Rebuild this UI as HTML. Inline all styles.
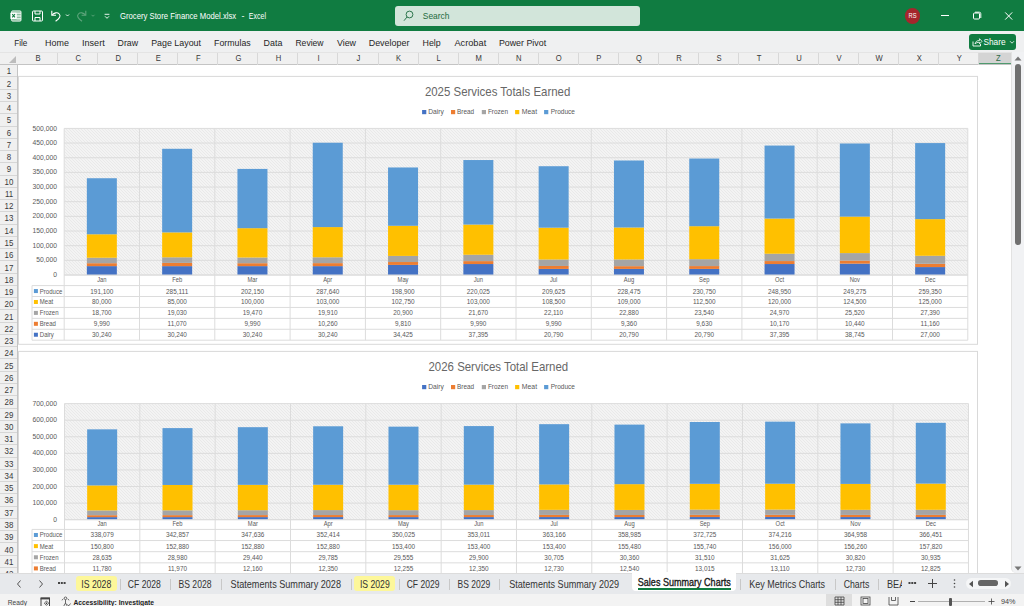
<!DOCTYPE html>
<html><head><meta charset="utf-8">
<style>
*{margin:0;padding:0;box-sizing:border-box}
html,body{width:1024px;height:606px;overflow:hidden;background:#fff;font-family:"Liberation Sans",sans-serif}
.a{position:absolute;white-space:nowrap}
#title{position:absolute;left:0;top:0;width:1024px;height:31.3px;background:#107c41}
#ribbon{position:absolute;left:0;top:31.3px;width:1024px;height:21px;background:#eff0f1}
#colhdr{position:absolute;left:0;top:52px;width:1011px;height:13px;background:#f0f0f0;border-top:1px solid #e4e4e4;border-bottom:1px solid #c4c4c4}
.ch{position:absolute;top:0;height:12px;width:40px;border-right:1px solid #d8d8d8}
#rowhdr{position:absolute;left:0;top:65px;width:18px;height:508px;background:#f0f0f0;border-right:1px solid #c4c4c4}
.rh{position:absolute;left:0;width:17px;border-bottom:1px solid #d6d6d6}
#tabs{position:absolute;left:0;top:573px;width:1024px;height:21px;background:#e7e9ec;box-shadow:inset 0 1px 0 #dcdcdc}
.sep{position:absolute;top:6px;width:1px;height:11px;background:#c8c8c8}
#status{position:absolute;left:0;top:594px;width:1024px;height:12px;background:#f3f3f3}
#vscroll{position:absolute;left:1011px;top:52px;width:13px;height:521px;background:#f1f2f4;border-left:1px solid #e2e2e2;border-radius:0 0 0 5px}
</style></head><body>
<div id="title">
  <svg class="a" style="left:0;top:0" width="400" height="31" viewBox="0 0 400 31">
    <rect x="11.5" y="10.8" width="9.6" height="10.4" rx="1.2" fill="#8fc0a3"/>
    <g stroke="#fff" stroke-width="1" fill="none">
      <rect x="11.5" y="10.8" width="9.6" height="10.4" rx="1.2" stroke-opacity="0.7"/>
      <line x1="16.5" y1="13.2" x2="21" y2="13.2"/><line x1="16.5" y1="16" x2="21" y2="16"/><line x1="16.5" y1="18.8" x2="21" y2="18.8"/>
    </g>
    <rect x="10.4" y="12.6" width="6.4" height="6.4" rx="0.6" fill="#fff"/>
    <path d="M12.2 14.2l2.8 3.2M15 14.2l-2.8 3.2" stroke="#107c41" stroke-width="1.1"/>
    <g fill="none" stroke="#fff" stroke-width="1">
      <rect x="32.5" y="11" width="10" height="10" rx="1"/>
      <path d="M35 11v3h5v-3"/>
      <path d="M35 21v-3.5h5v3.5"/>
    </g>
    <g fill="none" stroke="#fff" stroke-width="1.1">
      <path d="M51.8 10.8v4.4h4.2"/>
      <path d="M52.2 15c1.8-2.4 5.2-3 7-1c1.8 2 0.6 4-3.6 7.2"/>
      <path d="M66 14.5l1.5 1.5l1.5-1.5" stroke-width="0.9"/>
    </g>
    <g fill="none" stroke="#5fa57d" stroke-width="1.1">
      <path d="M85.8 10.8v4.4h-4.2"/>
      <path d="M85.4 15c-1.8-2.4-5.2-3-7-1c-1.8 2-0.6 4 3.6 7.2"/>
      <path d="M91.5 14.8l1.5 1.5l1.5-1.5" stroke-width="0.9"/>
    </g>
    <g fill="none" stroke="#fff" stroke-width="0.9">
      <line x1="104.6" y1="14.3" x2="109.4" y2="14.3"/>
      <path d="M105 16.3l2 2l2-2"/>
    </g>
  </svg>
  <div class="a" style="left:395.1px;top:5.9px;width:245px;height:20.3px;background:#d2e5da;border-radius:3px"></div>
  <svg class="a" style="left:400px;top:8px" width="16" height="16" viewBox="0 0 16 16"><circle cx="9.5" cy="6.5" r="3.4" fill="none" stroke="#1d6b40" stroke-width="0.9"/><line x1="7.1" y1="8.9" x2="4" y2="12.7" stroke="#1d6b40" stroke-width="0.9"/></svg>
  <div class="a" style="left:904.9px;top:8.2px;width:15.4px;height:15.4px;border-radius:50%;background:#a4262c"></div>
  <div class="a" style="left:941px;top:15px;width:7.5px;height:1px;background:#fff"></div>
  <svg class="a" style="left:970px;top:10px" width="14" height="12" viewBox="0 0 14 12"><rect x="3.5" y="3" width="6" height="6" rx="1" fill="none" stroke="#fff" stroke-width="1"/><path d="M5 2.2h4.3a1.5 1.5 0 0 1 1.5 1.5v4.3" fill="none" stroke="#fff" stroke-width="1"/></svg>
  <svg class="a" style="left:1003px;top:10px" width="12" height="12" viewBox="0 0 12 12"><path d="M2.2 2.4l7 7.2M9.2 2.4l-7 7.2" stroke="#fff" stroke-width="1"/></svg>
</div>
<div id="ribbon">
  <div class="a" style="left:969.3px;top:2.9px;width:47px;height:15.7px;background:#107c41;border-radius:3px"></div>
  <svg class="a" style="left:971px;top:5px" width="12" height="12" viewBox="0 0 12 12"><path d="M2 5.5v4.5h7.5v-2" fill="none" stroke="#fff" stroke-width="0.9"/><path d="M4 8c0.5-2.5 2-3.5 4.5-3.5v-1.8l2.5 2.6l-2.5 2.6v-1.6c-2 0-3.5 0.5-4.5 1.7z" fill="none" stroke="#fff" stroke-width="0.8"/></svg>
  <svg class="a" style="left:1009px;top:9px" width="6" height="5" viewBox="0 0 6 5"><path d="M1 1.2l2 2l2-2" fill="none" stroke="#fff" stroke-width="0.8"/></svg>
</div>
<div id="colhdr">
  <svg class="a" style="left:0;top:0" width="18" height="13"><path d="M16 3v7h-7z" fill="#bcbcbc"/></svg>
  <div class="ch" style="left:18.10px;width:40.05px"></div>
<div class="ch" style="left:58.15px;width:40.05px"></div>
<div class="ch" style="left:98.20px;width:40.05px"></div>
<div class="ch" style="left:138.25px;width:40.05px"></div>
<div class="ch" style="left:178.30px;width:40.05px"></div>
<div class="ch" style="left:218.35px;width:40.05px"></div>
<div class="ch" style="left:258.40px;width:40.05px"></div>
<div class="ch" style="left:298.45px;width:40.05px"></div>
<div class="ch" style="left:338.50px;width:40.05px"></div>
<div class="ch" style="left:378.55px;width:40.05px"></div>
<div class="ch" style="left:418.60px;width:40.05px"></div>
<div class="ch" style="left:458.65px;width:40.05px"></div>
<div class="ch" style="left:498.70px;width:40.05px"></div>
<div class="ch" style="left:538.75px;width:40.05px"></div>
<div class="ch" style="left:578.80px;width:40.05px"></div>
<div class="ch" style="left:618.85px;width:40.05px"></div>
<div class="ch" style="left:658.90px;width:40.05px"></div>
<div class="ch" style="left:698.95px;width:40.05px"></div>
<div class="ch" style="left:739.00px;width:40.05px"></div>
<div class="ch" style="left:779.05px;width:40.05px"></div>
<div class="ch" style="left:819.10px;width:40.05px"></div>
<div class="ch" style="left:859.15px;width:40.05px"></div>
<div class="ch" style="left:899.20px;width:40.05px"></div>
<div class="ch" style="left:939.25px;width:40.05px"></div>
<div class="ch" style="left:979.30px;width:32.8px;background:#d4d4d4;border-right:none;border-bottom:1.6px solid #4f9a6e;height:11.4px"></div>
</div>
<div id="rowhdr">
  <div class="rh" style="top:0.24px;height:12.26px"></div>
<div class="rh" style="top:12.50px;height:12.26px"></div>
<div class="rh" style="top:24.76px;height:12.26px"></div>
<div class="rh" style="top:37.02px;height:12.26px"></div>
<div class="rh" style="top:49.28px;height:12.26px"></div>
<div class="rh" style="top:61.54px;height:12.26px"></div>
<div class="rh" style="top:73.80px;height:12.26px"></div>
<div class="rh" style="top:86.06px;height:12.26px"></div>
<div class="rh" style="top:98.32px;height:12.26px"></div>
<div class="rh" style="top:110.58px;height:12.26px"></div>
<div class="rh" style="top:122.84px;height:12.26px"></div>
<div class="rh" style="top:135.10px;height:12.26px"></div>
<div class="rh" style="top:147.36px;height:12.26px"></div>
<div class="rh" style="top:159.62px;height:12.26px"></div>
<div class="rh" style="top:171.88px;height:12.26px"></div>
<div class="rh" style="top:184.14px;height:12.26px"></div>
<div class="rh" style="top:196.40px;height:12.26px"></div>
<div class="rh" style="top:208.66px;height:12.26px"></div>
<div class="rh" style="top:220.92px;height:12.26px"></div>
<div class="rh" style="top:233.18px;height:12.26px"></div>
<div class="rh" style="top:245.44px;height:12.26px"></div>
<div class="rh" style="top:257.70px;height:12.26px"></div>
<div class="rh" style="top:269.96px;height:12.26px"></div>
<div class="rh" style="top:282.22px;height:12.26px"></div>
<div class="rh" style="top:294.48px;height:12.26px"></div>
<div class="rh" style="top:306.74px;height:12.26px"></div>
<div class="rh" style="top:319.00px;height:12.26px"></div>
<div class="rh" style="top:331.26px;height:12.26px"></div>
<div class="rh" style="top:343.52px;height:12.26px"></div>
<div class="rh" style="top:355.78px;height:12.26px"></div>
<div class="rh" style="top:368.04px;height:12.26px"></div>
<div class="rh" style="top:380.30px;height:12.26px"></div>
<div class="rh" style="top:392.56px;height:12.26px"></div>
<div class="rh" style="top:404.82px;height:12.26px"></div>
<div class="rh" style="top:417.08px;height:12.26px"></div>
<div class="rh" style="top:429.34px;height:12.26px"></div>
<div class="rh" style="top:441.60px;height:12.26px"></div>
<div class="rh" style="top:453.86px;height:12.26px"></div>
<div class="rh" style="top:466.12px;height:12.26px"></div>
<div class="rh" style="top:478.38px;height:12.26px"></div>
<div class="rh" style="top:490.64px;height:12.26px"></div>
<div class="rh" style="top:502.90px;height:12.26px"></div>
</div>
<svg class="a" style="left:0;top:0" width="1024" height="606" viewBox="0 0 1024 606" font-family="Liberation Sans, sans-serif">
  <defs>
    <pattern id="hatch" patternUnits="userSpaceOnUse" width="3" height="3">
      <rect width="3" height="3" fill="#f8f8f8"/>
      <path d="M-1 -1l5 5M-1 2l2 2M2 -1l2 2" stroke="#e9e9e9" stroke-width="1.1"/>
    </pattern>
    <clipPath id="sheet"><rect x="18" y="65" width="993" height="508"/></clipPath>
  </defs>
  <g clip-path="url(#sheet)">
<rect x="18.5" y="76.4" width="959" height="267.9" fill="#fff" stroke="#d9d9d9" stroke-width="1"/>
<text x="424.90" y="95.80" font-size="12.6" fill="#676767" textLength="145.42" lengthAdjust="spacingAndGlyphs">2025 Services Totals Earned</text>
<rect x="422.10" y="110.00" width="4.2" height="4.2" fill="#4472C4"/>
<text x="428.20" y="114.10" font-size="7.1" fill="#595959" textLength="15.59" lengthAdjust="spacingAndGlyphs">Dairy</text>
<rect x="451.00" y="110.00" width="4.2" height="4.2" fill="#ED7D31"/>
<text x="457.00" y="114.10" font-size="7.1" fill="#595959" textLength="17.09" lengthAdjust="spacingAndGlyphs">Bread</text>
<rect x="481.80" y="110.00" width="4.2" height="4.2" fill="#A5A5A5"/>
<text x="487.90" y="114.10" font-size="7.1" fill="#595959" textLength="20.12" lengthAdjust="spacingAndGlyphs">Frozen</text>
<rect x="515.10" y="110.00" width="4.2" height="4.2" fill="#FFC000"/>
<text x="521.80" y="114.10" font-size="7.1" fill="#595959" textLength="15.29" lengthAdjust="spacingAndGlyphs">Meat</text>
<rect x="544.10" y="110.00" width="4.2" height="4.2" fill="#5B9BD5"/>
<text x="550.70" y="114.10" font-size="7.1" fill="#595959" textLength="24.30" lengthAdjust="spacingAndGlyphs">Produce</text>
<rect x="64.2" y="128.4" width="903.60" height="146.60" fill="url(#hatch)"/>
<line x1="64.2" y1="128.40" x2="967.80" y2="128.40" stroke="#dcdcdc" stroke-width="1"/>
<text x="56.90" y="130.50" font-size="7.1" text-anchor="end" fill="#595959" textLength="24.38" lengthAdjust="spacingAndGlyphs">500,000</text>
<line x1="64.2" y1="143.06" x2="967.80" y2="143.06" stroke="#dcdcdc" stroke-width="1"/>
<text x="56.90" y="145.16" font-size="7.1" text-anchor="end" fill="#595959" textLength="24.38" lengthAdjust="spacingAndGlyphs">450,000</text>
<line x1="64.2" y1="157.72" x2="967.80" y2="157.72" stroke="#dcdcdc" stroke-width="1"/>
<text x="56.90" y="159.82" font-size="7.1" text-anchor="end" fill="#595959" textLength="24.38" lengthAdjust="spacingAndGlyphs">400,000</text>
<line x1="64.2" y1="172.38" x2="967.80" y2="172.38" stroke="#dcdcdc" stroke-width="1"/>
<text x="56.90" y="174.48" font-size="7.1" text-anchor="end" fill="#595959" textLength="24.38" lengthAdjust="spacingAndGlyphs">350,000</text>
<line x1="64.2" y1="187.04" x2="967.80" y2="187.04" stroke="#dcdcdc" stroke-width="1"/>
<text x="56.90" y="189.14" font-size="7.1" text-anchor="end" fill="#595959" textLength="24.38" lengthAdjust="spacingAndGlyphs">300,000</text>
<line x1="64.2" y1="201.70" x2="967.80" y2="201.70" stroke="#dcdcdc" stroke-width="1"/>
<text x="56.90" y="203.80" font-size="7.1" text-anchor="end" fill="#595959" textLength="24.38" lengthAdjust="spacingAndGlyphs">250,000</text>
<line x1="64.2" y1="216.36" x2="967.80" y2="216.36" stroke="#dcdcdc" stroke-width="1"/>
<text x="56.90" y="218.46" font-size="7.1" text-anchor="end" fill="#595959" textLength="24.38" lengthAdjust="spacingAndGlyphs">200,000</text>
<line x1="64.2" y1="231.02" x2="967.80" y2="231.02" stroke="#dcdcdc" stroke-width="1"/>
<text x="56.90" y="233.12" font-size="7.1" text-anchor="end" fill="#595959" textLength="24.38" lengthAdjust="spacingAndGlyphs">150,000</text>
<line x1="64.2" y1="245.68" x2="967.80" y2="245.68" stroke="#dcdcdc" stroke-width="1"/>
<text x="56.90" y="247.78" font-size="7.1" text-anchor="end" fill="#595959" textLength="24.38" lengthAdjust="spacingAndGlyphs">100,000</text>
<line x1="64.2" y1="260.34" x2="967.80" y2="260.34" stroke="#dcdcdc" stroke-width="1"/>
<text x="56.90" y="262.44" font-size="7.1" text-anchor="end" fill="#595959" textLength="20.63" lengthAdjust="spacingAndGlyphs">50,000</text>
<line x1="64.2" y1="275.00" x2="967.80" y2="275.00" stroke="#dcdcdc" stroke-width="1"/>
<text x="56.90" y="277.10" font-size="7.1" text-anchor="end" fill="#595959" textLength="3.75" lengthAdjust="spacingAndGlyphs">0</text>
<rect x="86.85" y="266.13" width="30" height="8.87" fill="#4472C4"/>
<rect x="86.85" y="263.20" width="30" height="2.93" fill="#ED7D31"/>
<rect x="86.85" y="257.72" width="30" height="5.48" fill="#A5A5A5"/>
<rect x="86.85" y="234.27" width="30" height="23.46" fill="#FFC000"/>
<rect x="86.85" y="178.24" width="30" height="56.03" fill="#5B9BD5"/>
<rect x="162.15" y="266.13" width="30" height="8.87" fill="#4472C4"/>
<rect x="162.15" y="262.89" width="30" height="3.25" fill="#ED7D31"/>
<rect x="162.15" y="257.31" width="30" height="5.58" fill="#A5A5A5"/>
<rect x="162.15" y="232.39" width="30" height="24.92" fill="#FFC000"/>
<rect x="162.15" y="148.79" width="30" height="83.59" fill="#5B9BD5"/>
<rect x="237.45" y="266.13" width="30" height="8.87" fill="#4472C4"/>
<rect x="237.45" y="263.20" width="30" height="2.93" fill="#ED7D31"/>
<rect x="237.45" y="257.50" width="30" height="5.71" fill="#A5A5A5"/>
<rect x="237.45" y="228.18" width="30" height="29.32" fill="#FFC000"/>
<rect x="237.45" y="168.91" width="30" height="59.27" fill="#5B9BD5"/>
<rect x="312.75" y="266.13" width="30" height="8.87" fill="#4472C4"/>
<rect x="312.75" y="263.13" width="30" height="3.01" fill="#ED7D31"/>
<rect x="312.75" y="257.29" width="30" height="5.84" fill="#A5A5A5"/>
<rect x="312.75" y="227.09" width="30" height="30.20" fill="#FFC000"/>
<rect x="312.75" y="142.75" width="30" height="84.34" fill="#5B9BD5"/>
<rect x="388.05" y="264.91" width="30" height="10.09" fill="#4472C4"/>
<rect x="388.05" y="262.03" width="30" height="2.88" fill="#ED7D31"/>
<rect x="388.05" y="255.90" width="30" height="6.13" fill="#A5A5A5"/>
<rect x="388.05" y="225.78" width="30" height="30.13" fill="#FFC000"/>
<rect x="388.05" y="167.46" width="30" height="58.32" fill="#5B9BD5"/>
<rect x="463.35" y="264.04" width="30" height="10.96" fill="#4472C4"/>
<rect x="463.35" y="261.11" width="30" height="2.93" fill="#ED7D31"/>
<rect x="463.35" y="254.75" width="30" height="6.35" fill="#A5A5A5"/>
<rect x="463.35" y="224.55" width="30" height="30.20" fill="#FFC000"/>
<rect x="463.35" y="160.04" width="30" height="64.51" fill="#5B9BD5"/>
<rect x="538.65" y="268.90" width="30" height="6.10" fill="#4472C4"/>
<rect x="538.65" y="265.98" width="30" height="2.93" fill="#ED7D31"/>
<rect x="538.65" y="259.49" width="30" height="6.48" fill="#A5A5A5"/>
<rect x="538.65" y="227.68" width="30" height="31.81" fill="#FFC000"/>
<rect x="538.65" y="166.22" width="30" height="61.46" fill="#5B9BD5"/>
<rect x="613.95" y="268.90" width="30" height="6.10" fill="#4472C4"/>
<rect x="613.95" y="266.16" width="30" height="2.74" fill="#ED7D31"/>
<rect x="613.95" y="259.45" width="30" height="6.71" fill="#A5A5A5"/>
<rect x="613.95" y="227.49" width="30" height="31.96" fill="#FFC000"/>
<rect x="613.95" y="160.50" width="30" height="66.99" fill="#5B9BD5"/>
<rect x="689.25" y="268.90" width="30" height="6.10" fill="#4472C4"/>
<rect x="689.25" y="266.08" width="30" height="2.82" fill="#ED7D31"/>
<rect x="689.25" y="259.18" width="30" height="6.90" fill="#A5A5A5"/>
<rect x="689.25" y="226.19" width="30" height="32.98" fill="#FFC000"/>
<rect x="689.25" y="158.54" width="30" height="67.66" fill="#5B9BD5"/>
<rect x="764.55" y="264.04" width="30" height="10.96" fill="#4472C4"/>
<rect x="764.55" y="261.05" width="30" height="2.98" fill="#ED7D31"/>
<rect x="764.55" y="253.73" width="30" height="7.32" fill="#A5A5A5"/>
<rect x="764.55" y="218.55" width="30" height="35.18" fill="#FFC000"/>
<rect x="764.55" y="145.56" width="30" height="72.99" fill="#5B9BD5"/>
<rect x="839.85" y="263.64" width="30" height="11.36" fill="#4472C4"/>
<rect x="839.85" y="260.58" width="30" height="3.06" fill="#ED7D31"/>
<rect x="839.85" y="253.10" width="30" height="7.48" fill="#A5A5A5"/>
<rect x="839.85" y="216.59" width="30" height="36.50" fill="#FFC000"/>
<rect x="839.85" y="143.51" width="30" height="73.09" fill="#5B9BD5"/>
<rect x="915.15" y="267.08" width="30" height="7.92" fill="#4472C4"/>
<rect x="915.15" y="263.81" width="30" height="3.27" fill="#ED7D31"/>
<rect x="915.15" y="255.78" width="30" height="8.03" fill="#A5A5A5"/>
<rect x="915.15" y="219.13" width="30" height="36.65" fill="#FFC000"/>
<rect x="915.15" y="143.09" width="30" height="76.04" fill="#5B9BD5"/>
<line x1="64.2" y1="128.4" x2="64.2" y2="340.20" stroke="#dcdcdc" stroke-width="1"/>
<line x1="139.5" y1="128.4" x2="139.5" y2="340.20" stroke="#dcdcdc" stroke-width="1"/>
<line x1="214.8" y1="128.4" x2="214.8" y2="340.20" stroke="#dcdcdc" stroke-width="1"/>
<line x1="290.1" y1="128.4" x2="290.1" y2="340.20" stroke="#dcdcdc" stroke-width="1"/>
<line x1="365.4" y1="128.4" x2="365.4" y2="340.20" stroke="#dcdcdc" stroke-width="1"/>
<line x1="440.7" y1="128.4" x2="440.7" y2="340.20" stroke="#dcdcdc" stroke-width="1"/>
<line x1="516.0" y1="128.4" x2="516.0" y2="340.20" stroke="#dcdcdc" stroke-width="1"/>
<line x1="591.3" y1="128.4" x2="591.3" y2="340.20" stroke="#dcdcdc" stroke-width="1"/>
<line x1="666.6" y1="128.4" x2="666.6" y2="340.20" stroke="#dcdcdc" stroke-width="1"/>
<line x1="741.9" y1="128.4" x2="741.9" y2="340.20" stroke="#dcdcdc" stroke-width="1"/>
<line x1="817.2" y1="128.4" x2="817.2" y2="340.20" stroke="#dcdcdc" stroke-width="1"/>
<line x1="892.5" y1="128.4" x2="892.5" y2="340.20" stroke="#dcdcdc" stroke-width="1"/>
<line x1="967.8" y1="128.4" x2="967.8" y2="340.20" stroke="#dcdcdc" stroke-width="1"/>
<line x1="32" y1="285.6" x2="32" y2="340.20" stroke="#dcdcdc" stroke-width="1"/>
<line x1="32" y1="285.60" x2="967.80" y2="285.60" stroke="#dcdcdc" stroke-width="1"/>
<line x1="32" y1="296.52" x2="967.80" y2="296.52" stroke="#dcdcdc" stroke-width="1"/>
<line x1="32" y1="307.44" x2="967.80" y2="307.44" stroke="#dcdcdc" stroke-width="1"/>
<line x1="32" y1="318.36" x2="967.80" y2="318.36" stroke="#dcdcdc" stroke-width="1"/>
<line x1="32" y1="329.28" x2="967.80" y2="329.28" stroke="#dcdcdc" stroke-width="1"/>
<line x1="32" y1="340.20" x2="967.80" y2="340.20" stroke="#dcdcdc" stroke-width="1"/>
<line x1="64.2" y1="275.00" x2="967.80" y2="275.00" stroke="#dcdcdc" stroke-width="1"/>
<text x="101.85" y="282.10" font-size="6.6" text-anchor="middle" fill="#595959" textLength="9.36" lengthAdjust="spacingAndGlyphs">Jan</text>
<text x="177.15" y="282.10" font-size="6.6" text-anchor="middle" fill="#595959" textLength="10.01" lengthAdjust="spacingAndGlyphs">Feb</text>
<text x="252.45" y="282.10" font-size="6.6" text-anchor="middle" fill="#595959" textLength="10.00" lengthAdjust="spacingAndGlyphs">Mar</text>
<text x="327.75" y="282.10" font-size="6.6" text-anchor="middle" fill="#595959" textLength="9.04" lengthAdjust="spacingAndGlyphs">Apr</text>
<text x="403.05" y="282.10" font-size="6.6" text-anchor="middle" fill="#595959" textLength="10.97" lengthAdjust="spacingAndGlyphs">May</text>
<text x="478.35" y="282.10" font-size="6.6" text-anchor="middle" fill="#595959" textLength="9.36" lengthAdjust="spacingAndGlyphs">Jun</text>
<text x="553.65" y="282.10" font-size="6.6" text-anchor="middle" fill="#595959" textLength="7.42" lengthAdjust="spacingAndGlyphs">Jul</text>
<text x="628.95" y="282.10" font-size="6.6" text-anchor="middle" fill="#595959" textLength="10.33" lengthAdjust="spacingAndGlyphs">Aug</text>
<text x="704.25" y="282.10" font-size="6.6" text-anchor="middle" fill="#595959" textLength="10.33" lengthAdjust="spacingAndGlyphs">Sep</text>
<text x="779.55" y="282.10" font-size="6.6" text-anchor="middle" fill="#595959" textLength="9.04" lengthAdjust="spacingAndGlyphs">Oct</text>
<text x="854.85" y="282.10" font-size="6.6" text-anchor="middle" fill="#595959" textLength="10.33" lengthAdjust="spacingAndGlyphs">Nov</text>
<text x="930.15" y="282.10" font-size="6.6" text-anchor="middle" fill="#595959" textLength="10.33" lengthAdjust="spacingAndGlyphs">Dec</text>
<rect x="33.9" y="289.06" width="4" height="4" fill="#5B9BD5"/>
<text x="39.80" y="293.56" font-size="6.7" fill="#595959" textLength="22.46" lengthAdjust="spacingAndGlyphs">Produce</text>
<text x="101.85" y="293.56" font-size="6.8" text-anchor="middle" fill="#595959" textLength="23.11" lengthAdjust="spacingAndGlyphs">191,100</text>
<text x="177.15" y="293.56" font-size="6.8" text-anchor="middle" fill="#595959" textLength="22.16" lengthAdjust="spacingAndGlyphs">285,111</text>
<text x="252.45" y="293.56" font-size="6.8" text-anchor="middle" fill="#595959" textLength="23.11" lengthAdjust="spacingAndGlyphs">202,150</text>
<text x="327.75" y="293.56" font-size="6.8" text-anchor="middle" fill="#595959" textLength="23.11" lengthAdjust="spacingAndGlyphs">287,640</text>
<text x="403.05" y="293.56" font-size="6.8" text-anchor="middle" fill="#595959" textLength="23.11" lengthAdjust="spacingAndGlyphs">198,900</text>
<text x="478.35" y="293.56" font-size="6.8" text-anchor="middle" fill="#595959" textLength="23.11" lengthAdjust="spacingAndGlyphs">220,025</text>
<text x="553.65" y="293.56" font-size="6.8" text-anchor="middle" fill="#595959" textLength="23.11" lengthAdjust="spacingAndGlyphs">209,625</text>
<text x="628.95" y="293.56" font-size="6.8" text-anchor="middle" fill="#595959" textLength="23.11" lengthAdjust="spacingAndGlyphs">228,475</text>
<text x="704.25" y="293.56" font-size="6.8" text-anchor="middle" fill="#595959" textLength="23.11" lengthAdjust="spacingAndGlyphs">230,750</text>
<text x="779.55" y="293.56" font-size="6.8" text-anchor="middle" fill="#595959" textLength="23.11" lengthAdjust="spacingAndGlyphs">248,950</text>
<text x="854.85" y="293.56" font-size="6.8" text-anchor="middle" fill="#595959" textLength="23.11" lengthAdjust="spacingAndGlyphs">249,275</text>
<text x="930.15" y="293.56" font-size="6.8" text-anchor="middle" fill="#595959" textLength="23.11" lengthAdjust="spacingAndGlyphs">259,350</text>
<rect x="33.9" y="299.98" width="4" height="4" fill="#FFC000"/>
<text x="39.80" y="304.48" font-size="6.7" fill="#595959" textLength="13.41" lengthAdjust="spacingAndGlyphs">Meat</text>
<text x="101.85" y="304.48" font-size="6.8" text-anchor="middle" fill="#595959" textLength="19.55" lengthAdjust="spacingAndGlyphs">80,000</text>
<text x="177.15" y="304.48" font-size="6.8" text-anchor="middle" fill="#595959" textLength="19.55" lengthAdjust="spacingAndGlyphs">85,000</text>
<text x="252.45" y="304.48" font-size="6.8" text-anchor="middle" fill="#595959" textLength="23.11" lengthAdjust="spacingAndGlyphs">100,000</text>
<text x="327.75" y="304.48" font-size="6.8" text-anchor="middle" fill="#595959" textLength="23.11" lengthAdjust="spacingAndGlyphs">103,000</text>
<text x="403.05" y="304.48" font-size="6.8" text-anchor="middle" fill="#595959" textLength="23.11" lengthAdjust="spacingAndGlyphs">102,750</text>
<text x="478.35" y="304.48" font-size="6.8" text-anchor="middle" fill="#595959" textLength="23.11" lengthAdjust="spacingAndGlyphs">103,000</text>
<text x="553.65" y="304.48" font-size="6.8" text-anchor="middle" fill="#595959" textLength="23.11" lengthAdjust="spacingAndGlyphs">108,500</text>
<text x="628.95" y="304.48" font-size="6.8" text-anchor="middle" fill="#595959" textLength="23.11" lengthAdjust="spacingAndGlyphs">109,000</text>
<text x="704.25" y="304.48" font-size="6.8" text-anchor="middle" fill="#595959" textLength="22.63" lengthAdjust="spacingAndGlyphs">112,500</text>
<text x="779.55" y="304.48" font-size="6.8" text-anchor="middle" fill="#595959" textLength="23.11" lengthAdjust="spacingAndGlyphs">120,000</text>
<text x="854.85" y="304.48" font-size="6.8" text-anchor="middle" fill="#595959" textLength="23.11" lengthAdjust="spacingAndGlyphs">124,500</text>
<text x="930.15" y="304.48" font-size="6.8" text-anchor="middle" fill="#595959" textLength="23.11" lengthAdjust="spacingAndGlyphs">125,000</text>
<rect x="33.9" y="310.90" width="4" height="4" fill="#A5A5A5"/>
<text x="39.80" y="315.40" font-size="6.7" fill="#595959" textLength="18.77" lengthAdjust="spacingAndGlyphs">Frozen</text>
<text x="101.85" y="315.40" font-size="6.8" text-anchor="middle" fill="#595959" textLength="19.55" lengthAdjust="spacingAndGlyphs">18,700</text>
<text x="177.15" y="315.40" font-size="6.8" text-anchor="middle" fill="#595959" textLength="19.55" lengthAdjust="spacingAndGlyphs">19,030</text>
<text x="252.45" y="315.40" font-size="6.8" text-anchor="middle" fill="#595959" textLength="19.55" lengthAdjust="spacingAndGlyphs">19,470</text>
<text x="327.75" y="315.40" font-size="6.8" text-anchor="middle" fill="#595959" textLength="19.55" lengthAdjust="spacingAndGlyphs">19,910</text>
<text x="403.05" y="315.40" font-size="6.8" text-anchor="middle" fill="#595959" textLength="19.55" lengthAdjust="spacingAndGlyphs">20,900</text>
<text x="478.35" y="315.40" font-size="6.8" text-anchor="middle" fill="#595959" textLength="19.55" lengthAdjust="spacingAndGlyphs">21,670</text>
<text x="553.65" y="315.40" font-size="6.8" text-anchor="middle" fill="#595959" textLength="19.08" lengthAdjust="spacingAndGlyphs">22,110</text>
<text x="628.95" y="315.40" font-size="6.8" text-anchor="middle" fill="#595959" textLength="19.55" lengthAdjust="spacingAndGlyphs">22,880</text>
<text x="704.25" y="315.40" font-size="6.8" text-anchor="middle" fill="#595959" textLength="19.55" lengthAdjust="spacingAndGlyphs">23,540</text>
<text x="779.55" y="315.40" font-size="6.8" text-anchor="middle" fill="#595959" textLength="19.55" lengthAdjust="spacingAndGlyphs">24,970</text>
<text x="854.85" y="315.40" font-size="6.8" text-anchor="middle" fill="#595959" textLength="19.55" lengthAdjust="spacingAndGlyphs">25,520</text>
<text x="930.15" y="315.40" font-size="6.8" text-anchor="middle" fill="#595959" textLength="19.55" lengthAdjust="spacingAndGlyphs">27,390</text>
<rect x="33.9" y="321.82" width="4" height="4" fill="#ED7D31"/>
<text x="39.80" y="326.32" font-size="6.7" fill="#595959" textLength="16.09" lengthAdjust="spacingAndGlyphs">Bread</text>
<text x="101.85" y="326.32" font-size="6.8" text-anchor="middle" fill="#595959" textLength="16.00" lengthAdjust="spacingAndGlyphs">9,990</text>
<text x="177.15" y="326.32" font-size="6.8" text-anchor="middle" fill="#595959" textLength="19.08" lengthAdjust="spacingAndGlyphs">11,070</text>
<text x="252.45" y="326.32" font-size="6.8" text-anchor="middle" fill="#595959" textLength="16.00" lengthAdjust="spacingAndGlyphs">9,990</text>
<text x="327.75" y="326.32" font-size="6.8" text-anchor="middle" fill="#595959" textLength="19.55" lengthAdjust="spacingAndGlyphs">10,260</text>
<text x="403.05" y="326.32" font-size="6.8" text-anchor="middle" fill="#595959" textLength="16.00" lengthAdjust="spacingAndGlyphs">9,810</text>
<text x="478.35" y="326.32" font-size="6.8" text-anchor="middle" fill="#595959" textLength="16.00" lengthAdjust="spacingAndGlyphs">9,990</text>
<text x="553.65" y="326.32" font-size="6.8" text-anchor="middle" fill="#595959" textLength="16.00" lengthAdjust="spacingAndGlyphs">9,990</text>
<text x="628.95" y="326.32" font-size="6.8" text-anchor="middle" fill="#595959" textLength="16.00" lengthAdjust="spacingAndGlyphs">9,360</text>
<text x="704.25" y="326.32" font-size="6.8" text-anchor="middle" fill="#595959" textLength="16.00" lengthAdjust="spacingAndGlyphs">9,630</text>
<text x="779.55" y="326.32" font-size="6.8" text-anchor="middle" fill="#595959" textLength="19.55" lengthAdjust="spacingAndGlyphs">10,170</text>
<text x="854.85" y="326.32" font-size="6.8" text-anchor="middle" fill="#595959" textLength="19.55" lengthAdjust="spacingAndGlyphs">10,440</text>
<text x="930.15" y="326.32" font-size="6.8" text-anchor="middle" fill="#595959" textLength="19.08" lengthAdjust="spacingAndGlyphs">11,160</text>
<rect x="33.9" y="332.74" width="4" height="4" fill="#4472C4"/>
<text x="39.80" y="337.24" font-size="6.7" fill="#595959" textLength="14.07" lengthAdjust="spacingAndGlyphs">Dairy</text>
<text x="101.85" y="337.24" font-size="6.8" text-anchor="middle" fill="#595959" textLength="19.55" lengthAdjust="spacingAndGlyphs">30,240</text>
<text x="177.15" y="337.24" font-size="6.8" text-anchor="middle" fill="#595959" textLength="19.55" lengthAdjust="spacingAndGlyphs">30,240</text>
<text x="252.45" y="337.24" font-size="6.8" text-anchor="middle" fill="#595959" textLength="19.55" lengthAdjust="spacingAndGlyphs">30,240</text>
<text x="327.75" y="337.24" font-size="6.8" text-anchor="middle" fill="#595959" textLength="19.55" lengthAdjust="spacingAndGlyphs">30,240</text>
<text x="403.05" y="337.24" font-size="6.8" text-anchor="middle" fill="#595959" textLength="19.55" lengthAdjust="spacingAndGlyphs">34,425</text>
<text x="478.35" y="337.24" font-size="6.8" text-anchor="middle" fill="#595959" textLength="19.55" lengthAdjust="spacingAndGlyphs">37,395</text>
<text x="553.65" y="337.24" font-size="6.8" text-anchor="middle" fill="#595959" textLength="19.55" lengthAdjust="spacingAndGlyphs">20,790</text>
<text x="628.95" y="337.24" font-size="6.8" text-anchor="middle" fill="#595959" textLength="19.55" lengthAdjust="spacingAndGlyphs">20,790</text>
<text x="704.25" y="337.24" font-size="6.8" text-anchor="middle" fill="#595959" textLength="19.55" lengthAdjust="spacingAndGlyphs">20,790</text>
<text x="779.55" y="337.24" font-size="6.8" text-anchor="middle" fill="#595959" textLength="19.55" lengthAdjust="spacingAndGlyphs">37,395</text>
<text x="854.85" y="337.24" font-size="6.8" text-anchor="middle" fill="#595959" textLength="19.55" lengthAdjust="spacingAndGlyphs">38,745</text>
<text x="930.15" y="337.24" font-size="6.8" text-anchor="middle" fill="#595959" textLength="19.55" lengthAdjust="spacingAndGlyphs">27,000</text>
<rect x="18.5" y="351.4" width="959" height="448.6" fill="#fff" stroke="#d9d9d9" stroke-width="1"/>
<text x="428.50" y="370.50" font-size="12.6" fill="#676767" textLength="139.72" lengthAdjust="spacingAndGlyphs">2026 Services Total Earned</text>
<rect x="422.10" y="385.00" width="4.2" height="4.2" fill="#4472C4"/>
<text x="428.20" y="389.10" font-size="7.1" fill="#595959" textLength="15.59" lengthAdjust="spacingAndGlyphs">Dairy</text>
<rect x="451.00" y="385.00" width="4.2" height="4.2" fill="#ED7D31"/>
<text x="457.00" y="389.10" font-size="7.1" fill="#595959" textLength="17.09" lengthAdjust="spacingAndGlyphs">Bread</text>
<rect x="481.80" y="385.00" width="4.2" height="4.2" fill="#A5A5A5"/>
<text x="487.90" y="389.10" font-size="7.1" fill="#595959" textLength="20.12" lengthAdjust="spacingAndGlyphs">Frozen</text>
<rect x="515.10" y="385.00" width="4.2" height="4.2" fill="#FFC000"/>
<text x="521.80" y="389.10" font-size="7.1" fill="#595959" textLength="15.29" lengthAdjust="spacingAndGlyphs">Meat</text>
<rect x="544.10" y="385.00" width="4.2" height="4.2" fill="#5B9BD5"/>
<text x="550.70" y="389.10" font-size="7.1" fill="#595959" textLength="24.30" lengthAdjust="spacingAndGlyphs">Produce</text>
<rect x="64.5" y="403.6" width="903.96" height="116.10" fill="url(#hatch)"/>
<line x1="64.5" y1="403.60" x2="968.46" y2="403.60" stroke="#dcdcdc" stroke-width="1"/>
<text x="56.90" y="405.70" font-size="7.1" text-anchor="end" fill="#595959" textLength="24.38" lengthAdjust="spacingAndGlyphs">700,000</text>
<line x1="64.5" y1="420.19" x2="968.46" y2="420.19" stroke="#dcdcdc" stroke-width="1"/>
<text x="56.90" y="422.29" font-size="7.1" text-anchor="end" fill="#595959" textLength="24.38" lengthAdjust="spacingAndGlyphs">600,000</text>
<line x1="64.5" y1="436.77" x2="968.46" y2="436.77" stroke="#dcdcdc" stroke-width="1"/>
<text x="56.90" y="438.87" font-size="7.1" text-anchor="end" fill="#595959" textLength="24.38" lengthAdjust="spacingAndGlyphs">500,000</text>
<line x1="64.5" y1="453.36" x2="968.46" y2="453.36" stroke="#dcdcdc" stroke-width="1"/>
<text x="56.90" y="455.46" font-size="7.1" text-anchor="end" fill="#595959" textLength="24.38" lengthAdjust="spacingAndGlyphs">400,000</text>
<line x1="64.5" y1="469.94" x2="968.46" y2="469.94" stroke="#dcdcdc" stroke-width="1"/>
<text x="56.90" y="472.04" font-size="7.1" text-anchor="end" fill="#595959" textLength="24.38" lengthAdjust="spacingAndGlyphs">300,000</text>
<line x1="64.5" y1="486.53" x2="968.46" y2="486.53" stroke="#dcdcdc" stroke-width="1"/>
<text x="56.90" y="488.63" font-size="7.1" text-anchor="end" fill="#595959" textLength="24.38" lengthAdjust="spacingAndGlyphs">200,000</text>
<line x1="64.5" y1="503.11" x2="968.46" y2="503.11" stroke="#dcdcdc" stroke-width="1"/>
<text x="56.90" y="505.21" font-size="7.1" text-anchor="end" fill="#595959" textLength="24.38" lengthAdjust="spacingAndGlyphs">100,000</text>
<line x1="64.5" y1="519.70" x2="968.46" y2="519.70" stroke="#dcdcdc" stroke-width="1"/>
<text x="56.90" y="521.80" font-size="7.1" text-anchor="end" fill="#595959" textLength="3.75" lengthAdjust="spacingAndGlyphs">0</text>
<rect x="87.16" y="517.13" width="30" height="2.57" fill="#4472C4"/>
<rect x="87.16" y="515.18" width="30" height="1.95" fill="#ED7D31"/>
<rect x="87.16" y="510.43" width="30" height="4.75" fill="#A5A5A5"/>
<rect x="87.16" y="485.41" width="30" height="25.01" fill="#FFC000"/>
<rect x="87.16" y="429.34" width="30" height="56.07" fill="#5B9BD5"/>
<rect x="162.50" y="517.11" width="30" height="2.59" fill="#4472C4"/>
<rect x="162.50" y="515.13" width="30" height="1.99" fill="#ED7D31"/>
<rect x="162.50" y="510.32" width="30" height="4.81" fill="#A5A5A5"/>
<rect x="162.50" y="484.96" width="30" height="25.36" fill="#FFC000"/>
<rect x="162.50" y="428.10" width="30" height="56.87" fill="#5B9BD5"/>
<rect x="237.82" y="517.10" width="30" height="2.60" fill="#4472C4"/>
<rect x="237.82" y="515.08" width="30" height="2.02" fill="#ED7D31"/>
<rect x="237.82" y="510.20" width="30" height="4.88" fill="#A5A5A5"/>
<rect x="237.82" y="484.84" width="30" height="25.36" fill="#FFC000"/>
<rect x="237.82" y="427.18" width="30" height="57.66" fill="#5B9BD5"/>
<rect x="313.15" y="517.08" width="30" height="2.62" fill="#4472C4"/>
<rect x="313.15" y="515.03" width="30" height="2.05" fill="#ED7D31"/>
<rect x="313.15" y="510.09" width="30" height="4.94" fill="#A5A5A5"/>
<rect x="313.15" y="484.73" width="30" height="25.36" fill="#FFC000"/>
<rect x="313.15" y="426.28" width="30" height="58.45" fill="#5B9BD5"/>
<rect x="388.49" y="517.10" width="30" height="2.60" fill="#4472C4"/>
<rect x="388.49" y="515.06" width="30" height="2.03" fill="#ED7D31"/>
<rect x="388.49" y="510.16" width="30" height="4.90" fill="#A5A5A5"/>
<rect x="388.49" y="484.72" width="30" height="25.44" fill="#FFC000"/>
<rect x="388.49" y="426.66" width="30" height="58.05" fill="#5B9BD5"/>
<rect x="463.81" y="517.08" width="30" height="2.62" fill="#4472C4"/>
<rect x="463.81" y="515.03" width="30" height="2.05" fill="#ED7D31"/>
<rect x="463.81" y="510.07" width="30" height="4.96" fill="#A5A5A5"/>
<rect x="463.81" y="484.63" width="30" height="25.44" fill="#FFC000"/>
<rect x="463.81" y="426.08" width="30" height="58.55" fill="#5B9BD5"/>
<rect x="539.14" y="517.05" width="30" height="2.65" fill="#4472C4"/>
<rect x="539.14" y="514.93" width="30" height="2.11" fill="#ED7D31"/>
<rect x="539.14" y="509.84" width="30" height="5.09" fill="#A5A5A5"/>
<rect x="539.14" y="484.40" width="30" height="25.44" fill="#FFC000"/>
<rect x="539.14" y="424.17" width="30" height="60.23" fill="#5B9BD5"/>
<rect x="614.48" y="517.06" width="30" height="2.64" fill="#4472C4"/>
<rect x="614.48" y="514.98" width="30" height="2.08" fill="#ED7D31"/>
<rect x="614.48" y="509.95" width="30" height="5.04" fill="#A5A5A5"/>
<rect x="614.48" y="484.16" width="30" height="25.79" fill="#FFC000"/>
<rect x="614.48" y="424.62" width="30" height="59.54" fill="#5B9BD5"/>
<rect x="689.80" y="517.03" width="30" height="2.67" fill="#4472C4"/>
<rect x="689.80" y="514.87" width="30" height="2.16" fill="#ED7D31"/>
<rect x="689.80" y="509.64" width="30" height="5.23" fill="#A5A5A5"/>
<rect x="689.80" y="483.81" width="30" height="25.83" fill="#FFC000"/>
<rect x="689.80" y="422.00" width="30" height="61.82" fill="#5B9BD5"/>
<rect x="765.13" y="517.01" width="30" height="2.69" fill="#4472C4"/>
<rect x="765.13" y="514.84" width="30" height="2.17" fill="#ED7D31"/>
<rect x="765.13" y="509.59" width="30" height="5.25" fill="#A5A5A5"/>
<rect x="765.13" y="483.72" width="30" height="25.87" fill="#FFC000"/>
<rect x="765.13" y="421.65" width="30" height="62.07" fill="#5B9BD5"/>
<rect x="840.47" y="517.05" width="30" height="2.65" fill="#4472C4"/>
<rect x="840.47" y="514.93" width="30" height="2.11" fill="#ED7D31"/>
<rect x="840.47" y="509.82" width="30" height="5.11" fill="#A5A5A5"/>
<rect x="840.47" y="483.91" width="30" height="25.92" fill="#FFC000"/>
<rect x="840.47" y="423.38" width="30" height="60.53" fill="#5B9BD5"/>
<rect x="915.79" y="517.03" width="30" height="2.67" fill="#4472C4"/>
<rect x="915.79" y="514.90" width="30" height="2.13" fill="#ED7D31"/>
<rect x="915.79" y="509.77" width="30" height="5.13" fill="#A5A5A5"/>
<rect x="915.79" y="483.60" width="30" height="26.18" fill="#FFC000"/>
<rect x="915.79" y="422.82" width="30" height="60.78" fill="#5B9BD5"/>
<line x1="64.5" y1="403.6" x2="64.5" y2="585.15" stroke="#dcdcdc" stroke-width="1"/>
<line x1="139.83" y1="403.6" x2="139.83" y2="585.15" stroke="#dcdcdc" stroke-width="1"/>
<line x1="215.16" y1="403.6" x2="215.16" y2="585.15" stroke="#dcdcdc" stroke-width="1"/>
<line x1="290.49" y1="403.6" x2="290.49" y2="585.15" stroke="#dcdcdc" stroke-width="1"/>
<line x1="365.82" y1="403.6" x2="365.82" y2="585.15" stroke="#dcdcdc" stroke-width="1"/>
<line x1="441.15" y1="403.6" x2="441.15" y2="585.15" stroke="#dcdcdc" stroke-width="1"/>
<line x1="516.48" y1="403.6" x2="516.48" y2="585.15" stroke="#dcdcdc" stroke-width="1"/>
<line x1="591.81" y1="403.6" x2="591.81" y2="585.15" stroke="#dcdcdc" stroke-width="1"/>
<line x1="667.14" y1="403.6" x2="667.14" y2="585.15" stroke="#dcdcdc" stroke-width="1"/>
<line x1="742.47" y1="403.6" x2="742.47" y2="585.15" stroke="#dcdcdc" stroke-width="1"/>
<line x1="817.8" y1="403.6" x2="817.8" y2="585.15" stroke="#dcdcdc" stroke-width="1"/>
<line x1="893.13" y1="403.6" x2="893.13" y2="585.15" stroke="#dcdcdc" stroke-width="1"/>
<line x1="968.46" y1="403.6" x2="968.46" y2="585.15" stroke="#dcdcdc" stroke-width="1"/>
<line x1="32" y1="529.4" x2="32" y2="585.15" stroke="#dcdcdc" stroke-width="1"/>
<line x1="32" y1="529.40" x2="968.46" y2="529.40" stroke="#dcdcdc" stroke-width="1"/>
<line x1="32" y1="540.55" x2="968.46" y2="540.55" stroke="#dcdcdc" stroke-width="1"/>
<line x1="32" y1="551.70" x2="968.46" y2="551.70" stroke="#dcdcdc" stroke-width="1"/>
<line x1="32" y1="562.85" x2="968.46" y2="562.85" stroke="#dcdcdc" stroke-width="1"/>
<line x1="32" y1="574.00" x2="968.46" y2="574.00" stroke="#dcdcdc" stroke-width="1"/>
<line x1="32" y1="585.15" x2="968.46" y2="585.15" stroke="#dcdcdc" stroke-width="1"/>
<line x1="64.5" y1="519.70" x2="968.46" y2="519.70" stroke="#dcdcdc" stroke-width="1"/>
<text x="102.16" y="526.35" font-size="6.6" text-anchor="middle" fill="#595959" textLength="9.36" lengthAdjust="spacingAndGlyphs">Jan</text>
<text x="177.50" y="526.35" font-size="6.6" text-anchor="middle" fill="#595959" textLength="10.01" lengthAdjust="spacingAndGlyphs">Feb</text>
<text x="252.82" y="526.35" font-size="6.6" text-anchor="middle" fill="#595959" textLength="10.00" lengthAdjust="spacingAndGlyphs">Mar</text>
<text x="328.15" y="526.35" font-size="6.6" text-anchor="middle" fill="#595959" textLength="9.04" lengthAdjust="spacingAndGlyphs">Apr</text>
<text x="403.49" y="526.35" font-size="6.6" text-anchor="middle" fill="#595959" textLength="10.97" lengthAdjust="spacingAndGlyphs">May</text>
<text x="478.81" y="526.35" font-size="6.6" text-anchor="middle" fill="#595959" textLength="9.36" lengthAdjust="spacingAndGlyphs">Jun</text>
<text x="554.14" y="526.35" font-size="6.6" text-anchor="middle" fill="#595959" textLength="7.42" lengthAdjust="spacingAndGlyphs">Jul</text>
<text x="629.48" y="526.35" font-size="6.6" text-anchor="middle" fill="#595959" textLength="10.33" lengthAdjust="spacingAndGlyphs">Aug</text>
<text x="704.80" y="526.35" font-size="6.6" text-anchor="middle" fill="#595959" textLength="10.33" lengthAdjust="spacingAndGlyphs">Sep</text>
<text x="780.13" y="526.35" font-size="6.6" text-anchor="middle" fill="#595959" textLength="9.04" lengthAdjust="spacingAndGlyphs">Oct</text>
<text x="855.47" y="526.35" font-size="6.6" text-anchor="middle" fill="#595959" textLength="10.33" lengthAdjust="spacingAndGlyphs">Nov</text>
<text x="930.79" y="526.35" font-size="6.6" text-anchor="middle" fill="#595959" textLength="10.33" lengthAdjust="spacingAndGlyphs">Dec</text>
<rect x="33.9" y="532.98" width="4" height="4" fill="#5B9BD5"/>
<text x="39.80" y="537.48" font-size="6.7" fill="#595959" textLength="22.46" lengthAdjust="spacingAndGlyphs">Produce</text>
<text x="102.16" y="537.48" font-size="6.8" text-anchor="middle" fill="#595959" textLength="23.11" lengthAdjust="spacingAndGlyphs">338,079</text>
<text x="177.50" y="537.48" font-size="6.8" text-anchor="middle" fill="#595959" textLength="23.11" lengthAdjust="spacingAndGlyphs">342,857</text>
<text x="252.82" y="537.48" font-size="6.8" text-anchor="middle" fill="#595959" textLength="23.11" lengthAdjust="spacingAndGlyphs">347,636</text>
<text x="328.15" y="537.48" font-size="6.8" text-anchor="middle" fill="#595959" textLength="23.11" lengthAdjust="spacingAndGlyphs">352,414</text>
<text x="403.49" y="537.48" font-size="6.8" text-anchor="middle" fill="#595959" textLength="23.11" lengthAdjust="spacingAndGlyphs">350,025</text>
<text x="478.81" y="537.48" font-size="6.8" text-anchor="middle" fill="#595959" textLength="22.63" lengthAdjust="spacingAndGlyphs">353,011</text>
<text x="554.14" y="537.48" font-size="6.8" text-anchor="middle" fill="#595959" textLength="23.11" lengthAdjust="spacingAndGlyphs">363,166</text>
<text x="629.48" y="537.48" font-size="6.8" text-anchor="middle" fill="#595959" textLength="23.11" lengthAdjust="spacingAndGlyphs">358,985</text>
<text x="704.80" y="537.48" font-size="6.8" text-anchor="middle" fill="#595959" textLength="23.11" lengthAdjust="spacingAndGlyphs">372,725</text>
<text x="780.13" y="537.48" font-size="6.8" text-anchor="middle" fill="#595959" textLength="23.11" lengthAdjust="spacingAndGlyphs">374,216</text>
<text x="855.47" y="537.48" font-size="6.8" text-anchor="middle" fill="#595959" textLength="23.11" lengthAdjust="spacingAndGlyphs">364,958</text>
<text x="930.79" y="537.48" font-size="6.8" text-anchor="middle" fill="#595959" textLength="23.11" lengthAdjust="spacingAndGlyphs">366,451</text>
<rect x="33.9" y="544.12" width="4" height="4" fill="#FFC000"/>
<text x="39.80" y="548.62" font-size="6.7" fill="#595959" textLength="13.41" lengthAdjust="spacingAndGlyphs">Meat</text>
<text x="102.16" y="548.62" font-size="6.8" text-anchor="middle" fill="#595959" textLength="23.11" lengthAdjust="spacingAndGlyphs">150,800</text>
<text x="177.50" y="548.62" font-size="6.8" text-anchor="middle" fill="#595959" textLength="23.11" lengthAdjust="spacingAndGlyphs">152,880</text>
<text x="252.82" y="548.62" font-size="6.8" text-anchor="middle" fill="#595959" textLength="23.11" lengthAdjust="spacingAndGlyphs">152,880</text>
<text x="328.15" y="548.62" font-size="6.8" text-anchor="middle" fill="#595959" textLength="23.11" lengthAdjust="spacingAndGlyphs">152,880</text>
<text x="403.49" y="548.62" font-size="6.8" text-anchor="middle" fill="#595959" textLength="23.11" lengthAdjust="spacingAndGlyphs">153,400</text>
<text x="478.81" y="548.62" font-size="6.8" text-anchor="middle" fill="#595959" textLength="23.11" lengthAdjust="spacingAndGlyphs">153,400</text>
<text x="554.14" y="548.62" font-size="6.8" text-anchor="middle" fill="#595959" textLength="23.11" lengthAdjust="spacingAndGlyphs">153,400</text>
<text x="629.48" y="548.62" font-size="6.8" text-anchor="middle" fill="#595959" textLength="23.11" lengthAdjust="spacingAndGlyphs">155,480</text>
<text x="704.80" y="548.62" font-size="6.8" text-anchor="middle" fill="#595959" textLength="23.11" lengthAdjust="spacingAndGlyphs">155,740</text>
<text x="780.13" y="548.62" font-size="6.8" text-anchor="middle" fill="#595959" textLength="23.11" lengthAdjust="spacingAndGlyphs">156,000</text>
<text x="855.47" y="548.62" font-size="6.8" text-anchor="middle" fill="#595959" textLength="23.11" lengthAdjust="spacingAndGlyphs">156,260</text>
<text x="930.79" y="548.62" font-size="6.8" text-anchor="middle" fill="#595959" textLength="23.11" lengthAdjust="spacingAndGlyphs">157,820</text>
<rect x="33.9" y="555.27" width="4" height="4" fill="#A5A5A5"/>
<text x="39.80" y="559.77" font-size="6.7" fill="#595959" textLength="18.77" lengthAdjust="spacingAndGlyphs">Frozen</text>
<text x="102.16" y="559.77" font-size="6.8" text-anchor="middle" fill="#595959" textLength="19.55" lengthAdjust="spacingAndGlyphs">28,635</text>
<text x="177.50" y="559.77" font-size="6.8" text-anchor="middle" fill="#595959" textLength="19.55" lengthAdjust="spacingAndGlyphs">28,980</text>
<text x="252.82" y="559.77" font-size="6.8" text-anchor="middle" fill="#595959" textLength="19.55" lengthAdjust="spacingAndGlyphs">29,440</text>
<text x="328.15" y="559.77" font-size="6.8" text-anchor="middle" fill="#595959" textLength="19.55" lengthAdjust="spacingAndGlyphs">29,785</text>
<text x="403.49" y="559.77" font-size="6.8" text-anchor="middle" fill="#595959" textLength="19.55" lengthAdjust="spacingAndGlyphs">29,555</text>
<text x="478.81" y="559.77" font-size="6.8" text-anchor="middle" fill="#595959" textLength="19.55" lengthAdjust="spacingAndGlyphs">29,900</text>
<text x="554.14" y="559.77" font-size="6.8" text-anchor="middle" fill="#595959" textLength="19.55" lengthAdjust="spacingAndGlyphs">30,705</text>
<text x="629.48" y="559.77" font-size="6.8" text-anchor="middle" fill="#595959" textLength="19.55" lengthAdjust="spacingAndGlyphs">30,360</text>
<text x="704.80" y="559.77" font-size="6.8" text-anchor="middle" fill="#595959" textLength="19.55" lengthAdjust="spacingAndGlyphs">31,510</text>
<text x="780.13" y="559.77" font-size="6.8" text-anchor="middle" fill="#595959" textLength="19.55" lengthAdjust="spacingAndGlyphs">31,625</text>
<text x="855.47" y="559.77" font-size="6.8" text-anchor="middle" fill="#595959" textLength="19.55" lengthAdjust="spacingAndGlyphs">30,820</text>
<text x="930.79" y="559.77" font-size="6.8" text-anchor="middle" fill="#595959" textLength="19.55" lengthAdjust="spacingAndGlyphs">30,935</text>
<rect x="33.9" y="566.42" width="4" height="4" fill="#ED7D31"/>
<text x="39.80" y="570.92" font-size="6.7" fill="#595959" textLength="16.09" lengthAdjust="spacingAndGlyphs">Bread</text>
<text x="102.16" y="570.92" font-size="6.8" text-anchor="middle" fill="#595959" textLength="19.08" lengthAdjust="spacingAndGlyphs">11,780</text>
<text x="177.50" y="570.92" font-size="6.8" text-anchor="middle" fill="#595959" textLength="19.08" lengthAdjust="spacingAndGlyphs">11,970</text>
<text x="252.82" y="570.92" font-size="6.8" text-anchor="middle" fill="#595959" textLength="19.55" lengthAdjust="spacingAndGlyphs">12,160</text>
<text x="328.15" y="570.92" font-size="6.8" text-anchor="middle" fill="#595959" textLength="19.55" lengthAdjust="spacingAndGlyphs">12,350</text>
<text x="403.49" y="570.92" font-size="6.8" text-anchor="middle" fill="#595959" textLength="19.55" lengthAdjust="spacingAndGlyphs">12,255</text>
<text x="478.81" y="570.92" font-size="6.8" text-anchor="middle" fill="#595959" textLength="19.55" lengthAdjust="spacingAndGlyphs">12,350</text>
<text x="554.14" y="570.92" font-size="6.8" text-anchor="middle" fill="#595959" textLength="19.55" lengthAdjust="spacingAndGlyphs">12,730</text>
<text x="629.48" y="570.92" font-size="6.8" text-anchor="middle" fill="#595959" textLength="19.55" lengthAdjust="spacingAndGlyphs">12,540</text>
<text x="704.80" y="570.92" font-size="6.8" text-anchor="middle" fill="#595959" textLength="19.55" lengthAdjust="spacingAndGlyphs">13,015</text>
<text x="780.13" y="570.92" font-size="6.8" text-anchor="middle" fill="#595959" textLength="19.08" lengthAdjust="spacingAndGlyphs">13,110</text>
<text x="855.47" y="570.92" font-size="6.8" text-anchor="middle" fill="#595959" textLength="19.55" lengthAdjust="spacingAndGlyphs">12,730</text>
<text x="930.79" y="570.92" font-size="6.8" text-anchor="middle" fill="#595959" textLength="19.55" lengthAdjust="spacingAndGlyphs">12,825</text>
<rect x="33.9" y="577.57" width="4" height="4" fill="#4472C4"/>
<text x="39.80" y="582.07" font-size="6.7" fill="#595959" textLength="14.07" lengthAdjust="spacingAndGlyphs">Dairy</text>
<text x="102.16" y="582.07" font-size="6.8" text-anchor="middle" fill="#595959" textLength="19.55" lengthAdjust="spacingAndGlyphs">15,500</text>
<text x="177.50" y="582.07" font-size="6.8" text-anchor="middle" fill="#595959" textLength="19.55" lengthAdjust="spacingAndGlyphs">15,600</text>
<text x="252.82" y="582.07" font-size="6.8" text-anchor="middle" fill="#595959" textLength="19.55" lengthAdjust="spacingAndGlyphs">15,700</text>
<text x="328.15" y="582.07" font-size="6.8" text-anchor="middle" fill="#595959" textLength="19.55" lengthAdjust="spacingAndGlyphs">15,800</text>
<text x="403.49" y="582.07" font-size="6.8" text-anchor="middle" fill="#595959" textLength="19.55" lengthAdjust="spacingAndGlyphs">15,700</text>
<text x="478.81" y="582.07" font-size="6.8" text-anchor="middle" fill="#595959" textLength="19.55" lengthAdjust="spacingAndGlyphs">15,800</text>
<text x="554.14" y="582.07" font-size="6.8" text-anchor="middle" fill="#595959" textLength="19.55" lengthAdjust="spacingAndGlyphs">16,000</text>
<text x="629.48" y="582.07" font-size="6.8" text-anchor="middle" fill="#595959" textLength="19.55" lengthAdjust="spacingAndGlyphs">15,900</text>
<text x="704.80" y="582.07" font-size="6.8" text-anchor="middle" fill="#595959" textLength="19.55" lengthAdjust="spacingAndGlyphs">16,100</text>
<text x="780.13" y="582.07" font-size="6.8" text-anchor="middle" fill="#595959" textLength="19.55" lengthAdjust="spacingAndGlyphs">16,200</text>
<text x="855.47" y="582.07" font-size="6.8" text-anchor="middle" fill="#595959" textLength="19.55" lengthAdjust="spacingAndGlyphs">16,000</text>
<text x="930.79" y="582.07" font-size="6.8" text-anchor="middle" fill="#595959" textLength="19.55" lengthAdjust="spacingAndGlyphs">16,100</text>
  </g>
</svg>
<div id="vscroll">
  <svg class="a" style="left:1px;top:1.5px" width="10" height="8"><path d="M1.5 6.5l3.5-4l3.5 4z" fill="#777"/></svg>
  <div class="a" style="left:3px;top:11.6px;width:6px;height:181.7px;border-radius:3px;background:#707070"></div>
  <svg class="a" style="left:0.8px;top:513px" width="10" height="8"><path d="M1.5 1.5l3.5 4l3.5-4z" fill="#777"/></svg>
</div>
<div id="tabs">
  <svg class="a" style="left:15px;top:5.5px" width="8" height="10"><path d="M5.5 1.5l-3 3.5l3 3.5" fill="none" stroke="#555" stroke-width="1"/></svg>
  <svg class="a" style="left:37px;top:5.5px" width="8" height="10"><path d="M2.5 1.5l3 3.5l-3 3.5" fill="none" stroke="#555" stroke-width="1"/></svg>
  <div class="a" style="left:75.5px;top:2.6px;width:41.5px;height:15.2px;background:#fdf79a;border-radius:3px"></div>
  <div class="sep" style="left:119.5px"></div>
  <div class="sep" style="left:170.2px"></div>
  <div class="sep" style="left:220.9px"></div>
  <div class="sep" style="left:350.6px"></div>
  <div class="a" style="left:354.2px;top:2.6px;width:41.1px;height:15.2px;background:#fdf79a;border-radius:3px"></div>
  <div class="sep" style="left:398.7px"></div>
  <div class="sep" style="left:448.6px"></div>
  <div class="sep" style="left:499.3px"></div>
  <div class="a" style="left:632.3px;top:-1px;width:104px;height:19.2px;background:#fff;border-radius:0 0 4px 4px"></div>
  <div class="a" style="left:638px;top:15.2px;width:93px;height:1.4px;background:#107c41"></div>
  <div class="sep" style="left:739.5px"></div>
  <div class="sep" style="left:834.7px"></div>
  <div class="sep" style="left:878.4px"></div>
  <svg class="a" style="left:927px;top:5px" width="11" height="11"><path d="M5.5 1v9M1 5.5h9" stroke="#444" stroke-width="1"/></svg>
  <svg class="a" style="left:952px;top:5px" width="5" height="11"><circle cx="2.5" cy="2" r="0.8" fill="#444"/><circle cx="2.5" cy="5.5" r="0.8" fill="#444"/><circle cx="2.5" cy="9" r="0.8" fill="#444"/></svg>
  <div class="a" style="left:965.8px;top:5px;width:45.7px;height:10.8px;background:#f5f6f7;border-radius:5.4px"></div>
  <svg class="a" style="left:968px;top:6.5px" width="6" height="8"><path d="M5 0.8v6.4l-4-3.2z" fill="#555"/></svg>
  <div class="a" style="left:977.7px;top:7.4px;width:20.4px;height:5.6px;border-radius:2.8px;background:#666"></div>
  <svg class="a" style="left:1003.5px;top:6.5px" width="6" height="8"><path d="M1 0.8v6.4l4-3.2z" fill="#555"/></svg>
</div>
<div id="status">
  <svg class="a" style="left:39px;top:0" width="12" height="12"><path d="M2 12V4.3h8.5V12" fill="none" stroke="#444" stroke-width="1"/><rect x="1.5" y="3.4" width="9.5" height="2" fill="#444"/><path d="M7.5 7l2.2 2.2l-2.2 2.2l-2.2-2.2z" fill="none" stroke="#444" stroke-width="0.8"/><circle cx="7.5" cy="9.2" r="0.7" fill="#222"/></svg>
  <svg class="a" style="left:60px;top:0" width="12" height="12"><circle cx="5.5" cy="4.3" r="1.3" fill="none" stroke="#444" stroke-width="0.8"/><path d="M1.8 6.2l1.5-1.2M9.2 6.2l-1.5-1.2M5.5 5.8v3.2M3.8 12l1.7-3l1.7 3M7.5 10.5l1.3 1.3l1.7-2.3" fill="none" stroke="#444" stroke-width="0.8"/></svg>
  <div class="a" style="left:826.3px;top:0;width:26.2px;height:12px;background:#dedede"></div>
  <svg class="a" style="left:834px;top:1.5px" width="11" height="10"><path d="M1 1h9v8h-9zM1 3.7h9M1 6.3h9M4 1v8M7 1v8" fill="none" stroke="#444" stroke-width="0.8"/></svg>
  <svg class="a" style="left:860px;top:1.5px" width="11" height="10"><rect x="1" y="1" width="9" height="8" fill="none" stroke="#444" stroke-width="0.8"/><rect x="3" y="2.5" width="5" height="5" fill="none" stroke="#444" stroke-width="0.8"/></svg>
  <svg class="a" style="left:887.5px;top:1.5px" width="11" height="10"><path d="M1 1v8h9v-8M3.5 1v3.5h4v-3.5" fill="none" stroke="#444" stroke-width="0.8"/></svg>
  <div class="a" style="left:909.5px;top:7px;width:5px;height:1px;background:#444"></div>
  <div class="a" style="left:918px;top:7.3px;width:67px;height:1.2px;background:#b0b0b0"></div>
  <div class="a" style="left:948.5px;top:4.2px;width:3px;height:7.5px;background:#555;border-radius:1px"></div>
  <svg class="a" style="left:987.5px;top:3.8px" width="7" height="7"><path d="M3.5 0.5v6M0.5 3.5h6" stroke="#444" stroke-width="0.8"/></svg>
</div>
<svg class="a" style="left:0;top:0;pointer-events:none" width="1024" height="606" viewBox="0 0 1024 606" font-family="Liberation Sans, sans-serif">
  <defs><clipPath id="rowclip"><rect x="0" y="65" width="18" height="508"/></clipPath></defs>
  <g fill="#444">
    <rect x="58" y="582" width="2" height="2"/><rect x="60.8" y="582" width="2" height="2"/><rect x="63.6" y="582" width="2" height="2"/>
    <rect x="908.5" y="582" width="2" height="2"/><rect x="911.3" y="582" width="2" height="2"/><rect x="914.1" y="582" width="2" height="2"/>
  </g>
<text x="120.00" y="19.30" font-size="8.8" fill="#ffffff" textLength="116.21" lengthAdjust="spacingAndGlyphs">Grocery Store Finance Model.xlsx</text>
<text x="241.50" y="19.30" font-size="8.8" fill="#ffffff" textLength="2.98" lengthAdjust="spacingAndGlyphs">-</text>
<text x="248.80" y="19.30" font-size="8.8" fill="#ffffff" textLength="17.20" lengthAdjust="spacingAndGlyphs">Excel</text>
<text x="422.80" y="18.75" font-size="9.6" fill="#1d6b40" textLength="26.59" lengthAdjust="spacingAndGlyphs">Search</text>
<text x="912.60" y="18.20" font-size="6.4" text-anchor="middle" fill="#ffffff" textLength="8.00" lengthAdjust="spacingAndGlyphs">RS</text>
<text x="14.20" y="45.90" font-size="9.1" fill="#262626" textLength="13.11" lengthAdjust="spacingAndGlyphs">File</text>
<text x="45.10" y="45.90" font-size="9.1" fill="#262626" textLength="23.78" lengthAdjust="spacingAndGlyphs">Home</text>
<text x="82.00" y="45.90" font-size="9.1" fill="#262626" textLength="22.71" lengthAdjust="spacingAndGlyphs">Insert</text>
<text x="117.60" y="45.90" font-size="9.1" fill="#262626" textLength="20.49" lengthAdjust="spacingAndGlyphs">Draw</text>
<text x="151.20" y="45.90" font-size="9.1" fill="#262626" textLength="49.81" lengthAdjust="spacingAndGlyphs">Page Layout</text>
<text x="214.10" y="45.90" font-size="9.1" fill="#262626" textLength="36.58" lengthAdjust="spacingAndGlyphs">Formulas</text>
<text x="263.60" y="45.90" font-size="9.1" fill="#262626" textLength="18.78" lengthAdjust="spacingAndGlyphs">Data</text>
<text x="295.40" y="45.90" font-size="9.1" fill="#262626" textLength="28.19" lengthAdjust="spacingAndGlyphs">Review</text>
<text x="336.90" y="45.90" font-size="9.1" fill="#262626" textLength="19.10" lengthAdjust="spacingAndGlyphs">View</text>
<text x="368.70" y="45.90" font-size="9.1" fill="#262626" textLength="40.78" lengthAdjust="spacingAndGlyphs">Developer</text>
<text x="422.60" y="45.90" font-size="9.1" fill="#262626" textLength="18.12" lengthAdjust="spacingAndGlyphs">Help</text>
<text x="454.40" y="45.90" font-size="9.1" fill="#262626" textLength="31.81" lengthAdjust="spacingAndGlyphs">Acrobat</text>
<text x="498.90" y="45.90" font-size="9.1" fill="#262626" textLength="47.21" lengthAdjust="spacingAndGlyphs">Power Pivot</text>
<text x="983.40" y="45.30" font-size="9.0" fill="#ffffff" textLength="22.19" lengthAdjust="spacingAndGlyphs">Share</text>
<text x="38.10" y="61.40" font-size="9.0" text-anchor="middle" fill="#3a3a3a" textLength="5.10" lengthAdjust="spacingAndGlyphs">B</text>
<text x="78.15" y="61.40" font-size="9.0" text-anchor="middle" fill="#3a3a3a" textLength="5.52" lengthAdjust="spacingAndGlyphs">C</text>
<text x="118.20" y="61.40" font-size="9.0" text-anchor="middle" fill="#3a3a3a" textLength="5.52" lengthAdjust="spacingAndGlyphs">D</text>
<text x="158.25" y="61.40" font-size="9.0" text-anchor="middle" fill="#3a3a3a" textLength="5.10" lengthAdjust="spacingAndGlyphs">E</text>
<text x="198.30" y="61.40" font-size="9.0" text-anchor="middle" fill="#3a3a3a" textLength="4.67" lengthAdjust="spacingAndGlyphs">F</text>
<text x="238.35" y="61.40" font-size="9.0" text-anchor="middle" fill="#3a3a3a" textLength="5.95" lengthAdjust="spacingAndGlyphs">G</text>
<text x="278.40" y="61.40" font-size="9.0" text-anchor="middle" fill="#3a3a3a" textLength="5.52" lengthAdjust="spacingAndGlyphs">H</text>
<text x="318.45" y="61.40" font-size="9.0" text-anchor="middle" fill="#3a3a3a" textLength="2.13" lengthAdjust="spacingAndGlyphs">I</text>
<text x="358.50" y="61.40" font-size="9.0" text-anchor="middle" fill="#3a3a3a" textLength="3.82" lengthAdjust="spacingAndGlyphs">J</text>
<text x="398.55" y="61.40" font-size="9.0" text-anchor="middle" fill="#3a3a3a" textLength="5.10" lengthAdjust="spacingAndGlyphs">K</text>
<text x="438.60" y="61.40" font-size="9.0" text-anchor="middle" fill="#3a3a3a" textLength="4.25" lengthAdjust="spacingAndGlyphs">L</text>
<text x="478.65" y="61.40" font-size="9.0" text-anchor="middle" fill="#3a3a3a" textLength="6.37" lengthAdjust="spacingAndGlyphs">M</text>
<text x="518.70" y="61.40" font-size="9.0" text-anchor="middle" fill="#3a3a3a" textLength="5.52" lengthAdjust="spacingAndGlyphs">N</text>
<text x="558.75" y="61.40" font-size="9.0" text-anchor="middle" fill="#3a3a3a" textLength="5.95" lengthAdjust="spacingAndGlyphs">O</text>
<text x="598.80" y="61.40" font-size="9.0" text-anchor="middle" fill="#3a3a3a" textLength="5.10" lengthAdjust="spacingAndGlyphs">P</text>
<text x="638.85" y="61.40" font-size="9.0" text-anchor="middle" fill="#3a3a3a" textLength="5.95" lengthAdjust="spacingAndGlyphs">Q</text>
<text x="678.90" y="61.40" font-size="9.0" text-anchor="middle" fill="#3a3a3a" textLength="5.52" lengthAdjust="spacingAndGlyphs">R</text>
<text x="718.95" y="61.40" font-size="9.0" text-anchor="middle" fill="#3a3a3a" textLength="5.10" lengthAdjust="spacingAndGlyphs">S</text>
<text x="759.00" y="61.40" font-size="9.0" text-anchor="middle" fill="#3a3a3a" textLength="4.67" lengthAdjust="spacingAndGlyphs">T</text>
<text x="799.05" y="61.40" font-size="9.0" text-anchor="middle" fill="#3a3a3a" textLength="5.52" lengthAdjust="spacingAndGlyphs">U</text>
<text x="839.10" y="61.40" font-size="9.0" text-anchor="middle" fill="#3a3a3a" textLength="5.10" lengthAdjust="spacingAndGlyphs">V</text>
<text x="879.15" y="61.40" font-size="9.0" text-anchor="middle" fill="#3a3a3a" textLength="7.22" lengthAdjust="spacingAndGlyphs">W</text>
<text x="919.20" y="61.40" font-size="9.0" text-anchor="middle" fill="#3a3a3a" textLength="5.10" lengthAdjust="spacingAndGlyphs">X</text>
<text x="959.25" y="61.40" font-size="9.0" text-anchor="middle" fill="#3a3a3a" textLength="5.10" lengthAdjust="spacingAndGlyphs">Y</text>
<text x="998.30" y="61.40" font-size="9.0" text-anchor="middle" fill="#2e6b4a" textLength="4.67" lengthAdjust="spacingAndGlyphs">Z</text>
<g clip-path="url(#rowclip)">
<text x="9.00" y="74.37" font-size="8.8" text-anchor="middle" fill="#3a3a3a" textLength="4.40" lengthAdjust="spacingAndGlyphs">1</text>
<text x="9.00" y="86.63" font-size="8.8" text-anchor="middle" fill="#3a3a3a" textLength="4.40" lengthAdjust="spacingAndGlyphs">2</text>
<text x="9.00" y="98.89" font-size="8.8" text-anchor="middle" fill="#3a3a3a" textLength="4.40" lengthAdjust="spacingAndGlyphs">3</text>
<text x="9.00" y="111.15" font-size="8.8" text-anchor="middle" fill="#3a3a3a" textLength="4.40" lengthAdjust="spacingAndGlyphs">4</text>
<text x="9.00" y="123.41" font-size="8.8" text-anchor="middle" fill="#3a3a3a" textLength="4.40" lengthAdjust="spacingAndGlyphs">5</text>
<text x="9.00" y="135.67" font-size="8.8" text-anchor="middle" fill="#3a3a3a" textLength="4.40" lengthAdjust="spacingAndGlyphs">6</text>
<text x="9.00" y="147.93" font-size="8.8" text-anchor="middle" fill="#3a3a3a" textLength="4.40" lengthAdjust="spacingAndGlyphs">7</text>
<text x="9.00" y="160.19" font-size="8.8" text-anchor="middle" fill="#3a3a3a" textLength="4.40" lengthAdjust="spacingAndGlyphs">8</text>
<text x="9.00" y="172.45" font-size="8.8" text-anchor="middle" fill="#3a3a3a" textLength="4.40" lengthAdjust="spacingAndGlyphs">9</text>
<text x="9.00" y="184.71" font-size="8.8" text-anchor="middle" fill="#3a3a3a" textLength="8.81" lengthAdjust="spacingAndGlyphs">10</text>
<text x="9.00" y="196.97" font-size="8.8" text-anchor="middle" fill="#3a3a3a" textLength="8.22" lengthAdjust="spacingAndGlyphs">11</text>
<text x="9.00" y="209.23" font-size="8.8" text-anchor="middle" fill="#3a3a3a" textLength="8.81" lengthAdjust="spacingAndGlyphs">12</text>
<text x="9.00" y="221.49" font-size="8.8" text-anchor="middle" fill="#3a3a3a" textLength="8.81" lengthAdjust="spacingAndGlyphs">13</text>
<text x="9.00" y="233.75" font-size="8.8" text-anchor="middle" fill="#3a3a3a" textLength="8.81" lengthAdjust="spacingAndGlyphs">14</text>
<text x="9.00" y="246.01" font-size="8.8" text-anchor="middle" fill="#3a3a3a" textLength="8.81" lengthAdjust="spacingAndGlyphs">15</text>
<text x="9.00" y="258.27" font-size="8.8" text-anchor="middle" fill="#3a3a3a" textLength="8.81" lengthAdjust="spacingAndGlyphs">16</text>
<text x="9.00" y="270.53" font-size="8.8" text-anchor="middle" fill="#3a3a3a" textLength="8.81" lengthAdjust="spacingAndGlyphs">17</text>
<text x="9.00" y="282.79" font-size="8.8" text-anchor="middle" fill="#3a3a3a" textLength="8.81" lengthAdjust="spacingAndGlyphs">18</text>
<text x="9.00" y="295.05" font-size="8.8" text-anchor="middle" fill="#3a3a3a" textLength="8.81" lengthAdjust="spacingAndGlyphs">19</text>
<text x="9.00" y="307.31" font-size="8.8" text-anchor="middle" fill="#3a3a3a" textLength="8.81" lengthAdjust="spacingAndGlyphs">20</text>
<text x="9.00" y="319.57" font-size="8.8" text-anchor="middle" fill="#3a3a3a" textLength="8.81" lengthAdjust="spacingAndGlyphs">21</text>
<text x="9.00" y="331.83" font-size="8.8" text-anchor="middle" fill="#3a3a3a" textLength="8.81" lengthAdjust="spacingAndGlyphs">22</text>
<text x="9.00" y="344.09" font-size="8.8" text-anchor="middle" fill="#3a3a3a" textLength="8.81" lengthAdjust="spacingAndGlyphs">23</text>
<text x="9.00" y="356.35" font-size="8.8" text-anchor="middle" fill="#3a3a3a" textLength="8.81" lengthAdjust="spacingAndGlyphs">24</text>
<text x="9.00" y="368.61" font-size="8.8" text-anchor="middle" fill="#3a3a3a" textLength="8.81" lengthAdjust="spacingAndGlyphs">25</text>
<text x="9.00" y="380.87" font-size="8.8" text-anchor="middle" fill="#3a3a3a" textLength="8.81" lengthAdjust="spacingAndGlyphs">26</text>
<text x="9.00" y="393.13" font-size="8.8" text-anchor="middle" fill="#3a3a3a" textLength="8.81" lengthAdjust="spacingAndGlyphs">27</text>
<text x="9.00" y="405.39" font-size="8.8" text-anchor="middle" fill="#3a3a3a" textLength="8.81" lengthAdjust="spacingAndGlyphs">28</text>
<text x="9.00" y="417.65" font-size="8.8" text-anchor="middle" fill="#3a3a3a" textLength="8.81" lengthAdjust="spacingAndGlyphs">29</text>
<text x="9.00" y="429.91" font-size="8.8" text-anchor="middle" fill="#3a3a3a" textLength="8.81" lengthAdjust="spacingAndGlyphs">30</text>
<text x="9.00" y="442.17" font-size="8.8" text-anchor="middle" fill="#3a3a3a" textLength="8.81" lengthAdjust="spacingAndGlyphs">31</text>
<text x="9.00" y="454.43" font-size="8.8" text-anchor="middle" fill="#3a3a3a" textLength="8.81" lengthAdjust="spacingAndGlyphs">32</text>
<text x="9.00" y="466.69" font-size="8.8" text-anchor="middle" fill="#3a3a3a" textLength="8.81" lengthAdjust="spacingAndGlyphs">33</text>
<text x="9.00" y="478.95" font-size="8.8" text-anchor="middle" fill="#3a3a3a" textLength="8.81" lengthAdjust="spacingAndGlyphs">34</text>
<text x="9.00" y="491.21" font-size="8.8" text-anchor="middle" fill="#3a3a3a" textLength="8.81" lengthAdjust="spacingAndGlyphs">35</text>
<text x="9.00" y="503.47" font-size="8.8" text-anchor="middle" fill="#3a3a3a" textLength="8.81" lengthAdjust="spacingAndGlyphs">36</text>
<text x="9.00" y="515.73" font-size="8.8" text-anchor="middle" fill="#3a3a3a" textLength="8.81" lengthAdjust="spacingAndGlyphs">37</text>
<text x="9.00" y="527.99" font-size="8.8" text-anchor="middle" fill="#3a3a3a" textLength="8.81" lengthAdjust="spacingAndGlyphs">38</text>
<text x="9.00" y="540.25" font-size="8.8" text-anchor="middle" fill="#3a3a3a" textLength="8.81" lengthAdjust="spacingAndGlyphs">39</text>
<text x="9.00" y="552.51" font-size="8.8" text-anchor="middle" fill="#3a3a3a" textLength="8.81" lengthAdjust="spacingAndGlyphs">40</text>
<text x="9.00" y="564.77" font-size="8.8" text-anchor="middle" fill="#3a3a3a" textLength="8.81" lengthAdjust="spacingAndGlyphs">41</text>
<text x="9.00" y="577.03" font-size="8.8" text-anchor="middle" fill="#3a3a3a" textLength="8.81" lengthAdjust="spacingAndGlyphs">42</text>
</g>
<text x="81.25" y="587.60" font-size="10.6" fill="#333333" textLength="30.02" lengthAdjust="spacingAndGlyphs">IS 2028</text>
<text x="127.80" y="587.60" font-size="10.6" fill="#333333" textLength="33.00" lengthAdjust="spacingAndGlyphs">CF 2028</text>
<text x="178.50" y="587.60" font-size="10.6" fill="#333333" textLength="33.01" lengthAdjust="spacingAndGlyphs">BS 2028</text>
<text x="230.60" y="587.60" font-size="10.6" fill="#333333" textLength="110.42" lengthAdjust="spacingAndGlyphs">Statements Summary 2028</text>
<text x="359.90" y="587.60" font-size="10.6" fill="#333333" textLength="29.82" lengthAdjust="spacingAndGlyphs">IS 2029</text>
<text x="406.70" y="587.60" font-size="10.6" fill="#333333" textLength="32.80" lengthAdjust="spacingAndGlyphs">CF 2029</text>
<text x="457.60" y="587.60" font-size="10.6" fill="#333333" textLength="32.61" lengthAdjust="spacingAndGlyphs">BS 2029</text>
<text x="509.20" y="587.60" font-size="10.6" fill="#333333" textLength="109.92" lengthAdjust="spacingAndGlyphs">Statements Summary 2029</text>
<text x="749.30" y="587.60" font-size="10.6" fill="#333333" textLength="75.81" lengthAdjust="spacingAndGlyphs">Key Metrics Charts</text>
<text x="843.70" y="587.60" font-size="10.6" fill="#333333" textLength="25.70" lengthAdjust="spacingAndGlyphs">Charts</text>
<text x="637.80" y="585.80" font-size="10.5" fill="#1a1a1a" textLength="92.91" lengthAdjust="spacingAndGlyphs" stroke="#1a1a1a" stroke-width="0.35">Sales Summary Charts</text>
<svg x="884" y="573" width="18" height="21" overflow="hidden"><text x="3.00" y="14.60" font-size="10.6" fill="#333333" textLength="25.84" lengthAdjust="spacingAndGlyphs">BEAM</text></svg>
<text x="7.80" y="604.60" font-size="7.5" fill="#444444" textLength="19.20" lengthAdjust="spacingAndGlyphs">Ready</text>
<text x="73.40" y="604.60" font-size="7.5" font-weight="bold" fill="#222222" textLength="80.50" lengthAdjust="spacingAndGlyphs">Accessibility: Investigate</text>
<text x="1001.00" y="604.30" font-size="7.0" fill="#444444" textLength="14.51" lengthAdjust="spacingAndGlyphs">94%</text>
</svg>
</body></html>
